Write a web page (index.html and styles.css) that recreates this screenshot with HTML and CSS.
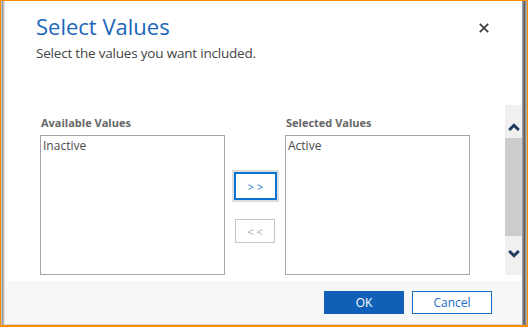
FILE: index.html
```html
<!DOCTYPE html>
<html>
<head>
<meta charset="utf-8">
<link rel="stylesheet" href="styles.css">
</head>
<body>
<div class="frame">
  <div class="edge-left"></div>
  <div class="dialog">
    <div class="header">
      <div class="heading">
        <div class="title">Select Values</div>
        <div class="subtitle">Select the values you want included.</div>
      </div>
      <button class="close" aria-label="Close">
        <svg width="10" height="10" viewBox="0 0 10 10"><path d="M0.8 0.8 L9.2 9.2 M9.2 0.8 L0.8 9.2" stroke="#3c3c3c" stroke-width="1.7" fill="none"/></svg>
      </button>
    </div>
    <div class="scroll-region">
      <div class="content">
        <div class="pane">
          <div class="label">Available Values</div>
          <div class="listbox"><div class="item">Inactive</div></div>
        </div>
        <div class="mover">
          <button class="move move-add">&gt; &gt;</button>
          <button class="move move-remove">&lt; &lt;</button>
        </div>
        <div class="pane">
          <div class="label">Selected Values</div>
          <div class="listbox"><div class="item">Active</div></div>
        </div>
      </div>
      <div class="scrollbar">
        <div class="sb-arrow sb-up">
          <svg width="12" height="8" viewBox="0 0 12 8"><path d="M1.2 7 L6 2.2 L10.8 7" stroke="#1f3a5c" stroke-width="2.9" fill="none"/></svg>
        </div>
        <div class="sb-thumb"></div>
        <div class="sb-arrow sb-down">
          <svg width="12" height="8" viewBox="0 0 12 8"><path d="M1.2 1 L6 5.8 L10.8 1" stroke="#1f3a5c" stroke-width="2.9" fill="none"/></svg>
        </div>
      </div>
    </div>
    <div class="footer">
      <button class="btn btn-primary">OK</button>
      <button class="btn btn-secondary">Cancel</button>
    </div>
  </div>
  <div class="edge-right"></div>
</div>
</body>
</html>
```
FILE: styles.css
```css
html, body {
  margin: 0;
  padding: 0;
  background: #ffffff;
}
body {
  font-family: "Open Sans", "Noto Sans", "Liberation Sans", sans-serif;
}
.frame {
  width: 528px;
  height: 327px;
  box-sizing: border-box;
  border-style: solid;
  border-color: #ff8c00;
  border-width: 1px 1px 2px 1px;
  display: flex;
  overflow: hidden;
}
.edge-left {
  width: 4px;
  flex: none;
  background: linear-gradient(to right, #c4c4c4 0, #c4c4c4 1px, #9a9a9a 1px, #9a9a9a 2px, #b8b8b8 2px, #b8b8b8 3px, #e2e2e2 3px);
}
.edge-right {
  width: 5px;
  flex: none;
  background: linear-gradient(to right, #9c9c9c 0, #9c9c9c 1px, #7a7a7a 1px, #7a7a7a 2px, #5e5e5e 2px, #5e5e5e 3px, #8c8c8c 3px, #8c8c8c 4px, #b4b4b4 4px);
}
.dialog {
  flex: 1;
  display: flex;
  flex-direction: column;
  background: #ffffff;
  border-bottom: 1px solid #d4d4d4;
}
.header {
  height: 104px;
  flex: none;
  display: flex;
  justify-content: space-between;
  align-items: flex-start;
}
.heading {
  padding: 10px 0 0 31px;
}
.title {
  font-size: 22px;
  line-height: 30px;
  color: #1c66bb;
  font-weight: 400;
}
.subtitle {
  margin-top: 2px;
  font-size: 13.5px;
  letter-spacing: -0.2px;
  line-height: 20px;
  color: #444444;
}
.close {
  margin: 21px 32px 0 0;
  width: 12px;
  height: 12px;
  padding: 1px;
  border: none;
  background: transparent;
  display: flex;
  align-items: center;
  justify-content: center;
}
.scroll-region {
  height: 170px;
  flex: none;
  display: flex;
}
.content {
  flex: 1;
  overflow: hidden;
  display: flex;
  padding: 10px 0 0 35px;
}
.pane {
  width: 185px;
  flex: none;
  display: flex;
  flex-direction: column;
}
.label {
  font-size: 11px;
  line-height: 15px;
  font-weight: 700;
  color: #666666;
  padding-left: 1px;
  margin-bottom: 5px;
}
.listbox {
  height: 170px;
  box-sizing: border-box;
  border: 1px solid #a6a6a6;
  padding: 2px 2px;
}
.item {
  font-size: 12px;
  line-height: 16px;
  color: #4a4a4a;
}
.mover {
  width: 60px;
  flex: none;
  display: flex;
  flex-direction: column;
  align-items: center;
  padding-top: 57px;
}
.move {
  font-family: "Open Sans", "Noto Sans", sans-serif;
  font-size: 11px;
  background: #ffffff;
  padding: 0;
  box-sizing: border-box;
  display: flex;
  align-items: center;
  justify-content: center;
}
.move-add {
  width: 43px;
  height: 28px;
  border: 2px solid #0a74d4;
  box-shadow: 0 0 0 2px #dedede;
  color: #1a72cc;
  margin-left: 1px;
}
.move-remove {
  margin-top: 19px;
  width: 40px;
  height: 24px;
  border: 1px solid #c6c6c6;
  color: #a8a8a8;
}
.scrollbar {
  width: 17px;
  flex: none;
  background: #f0f0f0;
  display: flex;
  flex-direction: column;
}
.sb-arrow {
  height: 17px;
  display: flex;
  align-items: center;
  justify-content: center;
  padding-left: 1px;
}
.sb-up {
  margin-top: 13px;
}
.sb-thumb {
  margin-top: 3px;
  height: 98px;
  background: #cdcdcd;
}
.sb-down {
  margin-top: 9px;
}
.footer {
  margin-top: 6px;
  flex: 1;
  background: #f7f7f7;
  display: flex;
  justify-content: flex-end;
  align-items: flex-start;
  padding: 10px 30px 0 0;
  gap: 8px;
}
.btn {
  width: 80px;
  height: 23px;
  box-sizing: border-box;
  font-family: "Open Sans", "Noto Sans", sans-serif;
  font-size: 12px;
  padding: 0;
  display: flex;
  align-items: center;
  justify-content: center;
}
.btn-primary {
  background: #1160b8;
  border: 1px solid #1160b8;
  color: #ffffff;
}
.btn-secondary {
  background: #ffffff;
  border: 1px solid #1a6cc4;
  color: #1a6cc4;
}
```
